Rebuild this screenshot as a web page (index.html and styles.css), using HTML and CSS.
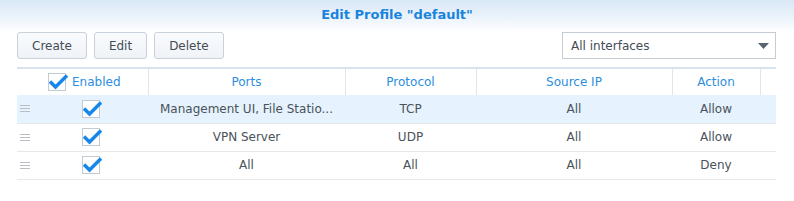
FILE: index.html
```html
<!DOCTYPE html>
<html>
<head>
<meta charset="utf-8">
<link rel="stylesheet" href="styles.css">
</head>
<body>
<div class="header">Edit Profile "default"</div>
<div class="toolbar">
  <div class="buttons">
    <button class="btn">Create</button>
    <button class="btn">Edit</button>
    <button class="btn">Delete</button>
  </div>
  <div class="select">
    <span>All interfaces</span>
    <svg class="caret" width="11" height="6" viewBox="0 0 11 6"><path d="M0 0H11L5.5 6Z" fill="#5a6470"/></svg>
  </div>
</div>
<table class="grid">
  <colgroup>
    <col class="c1"><col class="c2"><col class="c3"><col class="c4"><col class="c5"><col class="c6">
  </colgroup>
  <thead>
    <tr>
      <th><div class="hcheck"><span class="cb"><svg width="22" height="18" viewBox="0 0 22 18"><path d="M2 8.5L7.5 14L19 2.5" fill="none" stroke="#1686ea" stroke-width="3.4"/></svg></span><span>Enabled</span></div></th>
      <th>Ports</th>
      <th>Protocol</th>
      <th>Source IP</th>
      <th>Action</th>
      <th></th>
    </tr>
  </thead>
  <tbody>
    <tr class="sel">
      <td><div class="first"><span class="handle"></span><span class="cb"><svg width="22" height="18" viewBox="0 0 22 18"><path d="M2 8.5L7.5 14L19 2.5" fill="none" stroke="#1686ea" stroke-width="3.4"/></svg></span></div></td>
      <td>Management UI, File Statio...</td>
      <td>TCP</td>
      <td>All</td>
      <td>Allow</td>
      <td></td>
    </tr>
    <tr>
      <td><div class="first"><span class="handle"></span><span class="cb"><svg width="22" height="18" viewBox="0 0 22 18"><path d="M2 8.5L7.5 14L19 2.5" fill="none" stroke="#1686ea" stroke-width="3.4"/></svg></span></div></td>
      <td>VPN Server</td>
      <td>UDP</td>
      <td>All</td>
      <td>Allow</td>
      <td></td>
    </tr>
    <tr>
      <td><div class="first"><span class="handle"></span><span class="cb"><svg width="22" height="18" viewBox="0 0 22 18"><path d="M2 8.5L7.5 14L19 2.5" fill="none" stroke="#1686ea" stroke-width="3.4"/></svg></span></div></td>
      <td>All</td>
      <td>All</td>
      <td>All</td>
      <td>Deny</td>
      <td></td>
    </tr>
  </tbody>
</table>
</body>
</html>
```

FILE: styles.css
```css
* { box-sizing: border-box; }
html, body { margin: 0; padding: 0; background: #fff; }
body {
  width: 794px;
  height: 201px;
  overflow: hidden;
  font-family: "DejaVu Sans", Verdana, sans-serif;
  font-size: 12px;
  color: #4a525a;
}
.header {
  height: 32px;
  padding-top: 7px;
  text-align: center;
  font-weight: bold;
  font-size: 13px;
  color: #1a84dd;
  background: linear-gradient(to bottom, #d9e8f7 0%, #edf4fb 60%, #ffffff 100%);
}
.toolbar {
  display: flex;
  justify-content: space-between;
  align-items: center;
  padding: 0 18px 0 17px;
  height: 27px;
}
.buttons { display: flex; gap: 7px; }
.btn {
  height: 27px;
  padding: 0 14px;
  border: 1px solid #c8d0d9;
  border-radius: 3px;
  background: linear-gradient(to bottom, #f9fbfd, #eff3f7);
  font-family: inherit;
  font-size: 12px;
  color: #444c55;
}
.select {
  width: 214px;
  height: 27px;
  border: 1px solid #c5ccd4;
  display: flex;
  align-items: center;
  justify-content: space-between;
  padding: 0 6px 0 8px;
  color: #444c55;
}
.caret { display: block; }
.grid {
  margin: 8px 0 0 17px;
  width: 759px;
  table-layout: fixed;
  border-collapse: collapse;
}
.c1 { width: 131px; }
.c2 { width: 197px; }
.c3 { width: 131px; }
.c4 { width: 196px; }
.c5 { width: 88px; }
.c6 { width: 16px; }
.grid th {
  height: 27px;
  font-weight: normal;
  color: #2b8ee0;
  border-top: 2px solid #d8e3ee;
  border-left: 1px solid #dde6ef;
  padding: 0;
  text-align: center;
}
.grid th:first-child { border-left: none; }
.grid td {
  height: 28px;
  padding: 0;
  text-align: center;
  border-bottom: 1px solid #e6e8ea;
  white-space: nowrap;
  overflow: hidden;
}
.grid tr.sel td { background: #e6f2fd; }
.hcheck {
  display: flex;
  align-items: center;
  gap: 6px;
  padding-left: 31px;
}
.first {
  display: flex;
  align-items: center;
  padding-left: 3px;
}
.handle {
  width: 10px;
  height: 7px;
  border-top: 1px solid #b8bec4;
  border-bottom: 1px solid #b8bec4;
  position: relative;
  margin-right: 52px;
}
.handle::after {
  content: "";
  position: absolute;
  left: 0; right: 0; top: 2px;
  border-top: 1px solid #b8bec4;
}
.cb {
  width: 18px;
  height: 18px;
  border: 1px solid #c2cad2;
  background: #fff;
  position: relative;
  display: inline-block;
  flex: none;
}
.cb svg {
  position: absolute;
  left: -1px;
  top: -1px;
}
```
